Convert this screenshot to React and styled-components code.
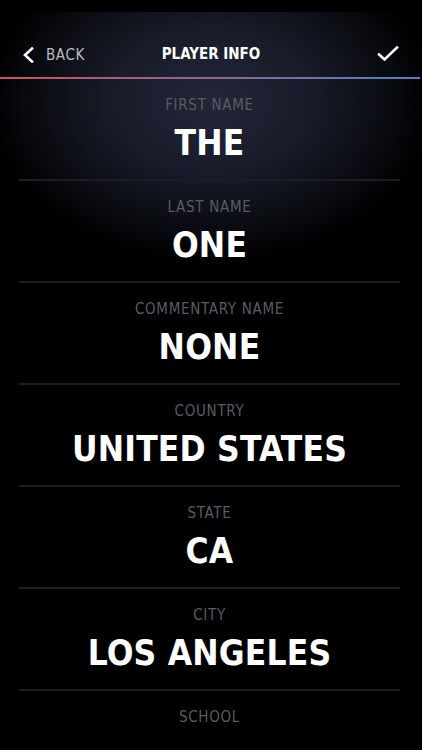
import React from 'react';
import styled, { createGlobalStyle } from 'styled-components';

const GlobalStyle = createGlobalStyle`
  html, body {
    margin: 0;
    padding: 0;
    background: #000;
  }
  * { box-sizing: border-box; }
`;

const FONT = `"DejaVu Sans Condensed", "DejaVu Sans", sans-serif`;

const Screen = styled.div`
  width: 422px;
  height: 750px;
  overflow: hidden;
  display: flex;
  flex-direction: column;
  background:
    radial-gradient(ellipse 220px 160px at 50% 100px, #222638 0%, #181b29 45%, #08090e 85%, #000 100%),
    #000;
  font-family: ${FONT};
`;

const StatusBar = styled.div`
  height: 12px;
  flex-shrink: 0;
  background: #000;
`;

const Header = styled.header`
  height: 65px;
  flex-shrink: 0;
  display: grid;
  grid-template-columns: 1fr auto 1fr;
  align-items: center;
  padding: 19px 22px 0;
`;

const BackButton = styled.button`
  justify-self: start;
  display: flex;
  align-items: center;
  gap: 12px;
  background: none;
  border: 0;
  padding: 0;
  color: #b9bac2;
  font-family: ${FONT};
  font-size: 15px;
  letter-spacing: 0.6px;
  margin-top: 1px;
`;

const Title = styled.h1`
  margin: 0;
  color: #fff;
  font-size: 15px;
  font-weight: bold;
  letter-spacing: 0;
`;

const ConfirmButton = styled.button`
  justify-self: end;
  background: none;
  border: 0;
  padding: 0;
  display: flex;
  margin-right: 1px;
`;

const AccentLine = styled.div`
  height: 2px;
  flex-shrink: 0;
  margin-right: 2px;
  background: linear-gradient(90deg, #d0505f 0%, #9a6280 40%, #6f73a8 70%, #4f7fc2 100%);
`;

const FieldList = styled.div`
  padding: 0 22px 0 19px;
`;

const Field = styled.div`
  height: 102px;
  display: flex;
  flex-direction: column;
  align-items: center;
  padding-top: 16px;
  border-bottom: 2px solid #1b1c26;
`;

const Label = styled.div`
  line-height: 20px;
  font-size: 15px;
  color: #5b5b61;
  letter-spacing: 0.7px;
`;

const Value = styled.div`
  margin-top: 8px;
  line-height: 40px;
  font-size: 35px;
  font-weight: bold;
  color: #fff;
  letter-spacing: 0.2px;
`;

const fields = [
  { label: 'FIRST NAME', value: 'THE' },
  { label: 'LAST NAME', value: 'ONE' },
  { label: 'COMMENTARY NAME', value: 'NONE' },
  { label: 'COUNTRY', value: 'UNITED STATES' },
  { label: 'STATE', value: 'CA' },
  { label: 'CITY', value: 'LOS ANGELES' },
  { label: 'SCHOOL', value: '' },
];

export default function App() {
  return (
    <>
      <GlobalStyle />
      <Screen>
        <StatusBar />
        <Header>
          <BackButton>
            <svg width="12" height="16" viewBox="0 0 12 16">
              <path d="M10 1.5 L3 8 L10 14.5" fill="none" stroke="#fff" strokeWidth="2.6" strokeLinecap="square" />
            </svg>
            BACK
          </BackButton>
          <Title>PLAYER INFO</Title>
          <ConfirmButton>
            <svg width="22" height="16" viewBox="0 0 22 16">
              <path d="M2 8.5 L7.5 13.5 L20 1.5" fill="none" stroke="#fff" strokeWidth="2.6" strokeLinecap="square" />
            </svg>
          </ConfirmButton>
        </Header>
        <AccentLine />
        <FieldList>
          {fields.map((f) => (
            <Field key={f.label}>
              <Label>{f.label}</Label>
              {f.value && <Value>{f.value}</Value>}
            </Field>
          ))}
        </FieldList>
      </Screen>
    </>
  );
}
